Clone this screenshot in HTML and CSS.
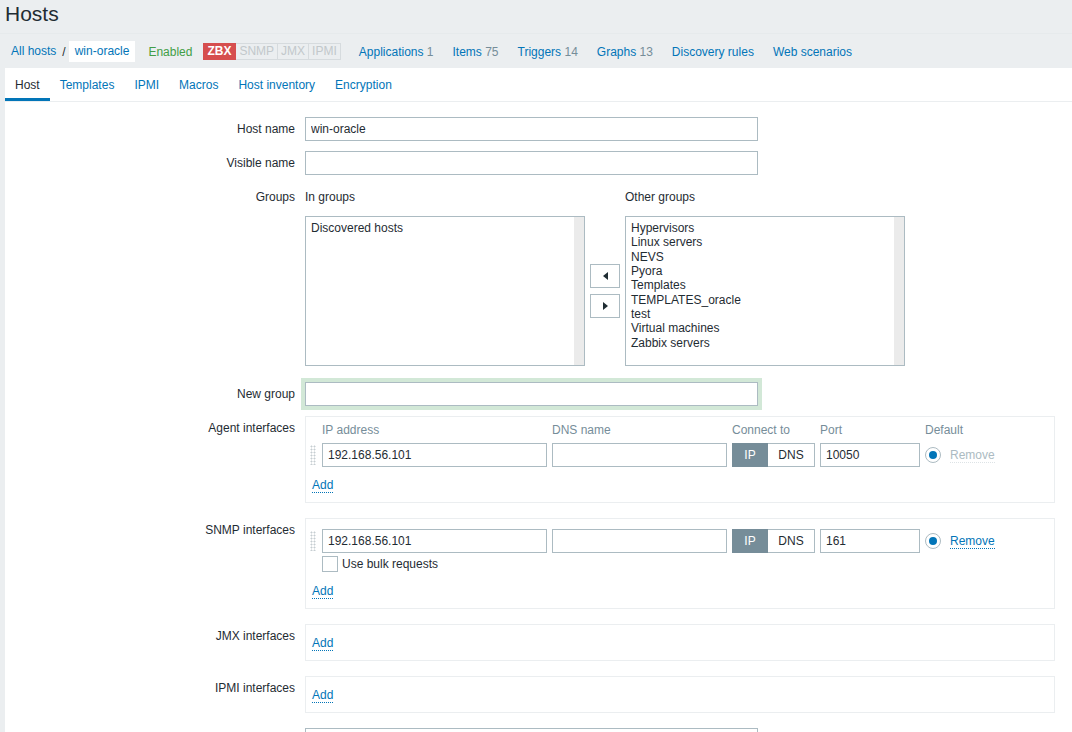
FILE: index.html
```html
<!DOCTYPE html>
<html>
<head>
<meta charset="utf-8">
<title>Hosts</title>
<link rel="stylesheet" href="styles.css">
</head>
<body>
<h1 class="title">Hosts</h1>
<nav class="hostnav">
  <a class="crumb">All hosts</a><span class="sep">/</span><a class="crumb current">win-oracle</a>
  <span class="status-on">Enabled</span>
  <span class="avail"><span class="badge zbx">ZBX</span><span class="badge">SNMP</span><span class="badge">JMX</span><span class="badge">IPMI</span></span>
  <a class="navlink first">Applications <span class="cnt">1</span></a>
  <a class="navlink">Items <span class="cnt">75</span></a>
  <a class="navlink">Triggers <span class="cnt">14</span></a>
  <a class="navlink">Graphs <span class="cnt">13</span></a>
  <a class="navlink">Discovery rules</a>
  <a class="navlink">Web scenarios</a>
</nav>
<div class="panel">
  <ul class="tabs">
    <li class="tab active">Host</li>
    <li class="tab">Templates</li>
    <li class="tab">IPMI</li>
    <li class="tab">Macros</li>
    <li class="tab">Host inventory</li>
    <li class="tab">Encryption</li>
  </ul>
  <div class="form">
    <div class="row">
      <div class="lbl">Host name</div>
      <input class="inp w453" type="text" value="win-oracle">
    </div>
    <div class="row">
      <div class="lbl">Visible name</div>
      <input class="inp w453" type="text" value="">
    </div>
    <div class="row groups-row">
      <div class="lbl">Groups</div>
      <div class="groups">
        <div class="ghead">In groups</div>
        <div class="gspace"></div>
        <div class="ghead">Other groups</div>
        <div class="listbox">
          <div class="opts"><div>Discovered hosts</div></div>
          <div class="track"></div>
        </div>
        <div class="moves">
          <button class="mv"><span class="tri-l"></span></button>
          <button class="mv"><span class="tri-r"></span></button>
        </div>
        <div class="listbox">
          <div class="opts">
            <div>Hypervisors</div>
            <div>Linux servers</div>
            <div>NEVS</div>
            <div>Pyora</div>
            <div>Templates</div>
            <div>TEMPLATES_oracle</div>
            <div>test</div>
            <div>Virtual machines</div>
            <div>Zabbix servers</div>
          </div>
          <div class="track"></div>
        </div>
      </div>
    </div>
    <div class="row">
      <div class="lbl">New group</div>
      <input class="inp w453 focus" type="text" value="">
    </div>
    <div class="row ifrow-wrap">
      <div class="lbl">Agent interfaces</div>
      <div class="ifbox agent">
        <div class="ifhead">
          <div class="c-h"></div>
          <div class="c-ip">IP address</div>
          <div class="c-dns">DNS name</div>
          <div class="c-conn">Connect to</div>
          <div class="c-port">Port</div>
          <div class="c-defh">Default</div>
        </div>
        <div class="ifline">
          <div class="c-h"><div class="handle"></div></div>
          <input class="inp c-ip" type="text" value="192.168.56.101">
          <input class="inp c-dns" type="text" value="">
          <div class="c-conn toggle"><span class="tg on">IP</span><span class="tg">DNS</span></div>
          <input class="inp c-port" type="text" value="10050">
          <div class="c-def"><span class="radio"><span class="dot"></span></span><span class="remove disabled">Remove</span></div>
        </div>
        <div class="addline"><a class="add">Add</a></div>
      </div>
    </div>
    <div class="row ifrow-wrap">
      <div class="lbl">SNMP interfaces</div>
      <div class="ifbox snmp">
        <div class="ifline">
          <div class="c-h"><div class="handle"></div></div>
          <input class="inp c-ip" type="text" value="192.168.56.101">
          <input class="inp c-dns" type="text" value="">
          <div class="c-conn toggle"><span class="tg on">IP</span><span class="tg">DNS</span></div>
          <input class="inp c-port" type="text" value="161">
          <div class="c-def"><span class="radio"><span class="dot"></span></span><a class="remove">Remove</a></div>
        </div>
        <div class="bulk"><span class="check"></span><span class="bulk-lbl">Use bulk requests</span></div>
        <div class="addline"><a class="add">Add</a></div>
      </div>
    </div>
    <div class="row ifrow-wrap">
      <div class="lbl">JMX interfaces</div>
      <div class="ifbox empty">
        <div class="addline"><a class="add">Add</a></div>
      </div>
    </div>
    <div class="row ifrow-wrap">
      <div class="lbl">IPMI interfaces</div>
      <div class="ifbox empty">
        <div class="addline"><a class="add">Add</a></div>
      </div>
    </div>
    <div class="row">
      <div class="lbl"></div>
      <textarea class="inp w453 area" aria-label="Description"></textarea>
    </div>
  </div>
</div>
</body>
</html>
```
FILE: styles.css
```css
* { box-sizing: border-box; }
body {
  margin: 0;
  background: #ebeef0;
  font-family: "Liberation Sans", Arial, sans-serif;
  font-size: 12px;
  color: #1f2c33;
}
a { color: #0275b8; text-decoration: none; cursor: pointer; }

.title {
  margin: 0;
  padding: 0 5px;
  height: 33px;
  font-size: 21px;
  font-weight: normal;
  line-height: 28px;
  color: #1f2c33;
}

.hostnav {
  height: 35px;
  display: flex;
  align-items: center;
  padding: 1px 0 0 5px;
  border-top: 1px solid #e6eaec;
  white-space: nowrap;
}
.crumb {
  height: 21px;
  line-height: 21px;
  padding: 0 6px;
}
.crumb.current {
  background: #fff;
  margin-left: 3px;
}
.sep { color: #1f2c33; }
.status-on { color: #429e47; margin-left: 13px; }
.avail { display: flex; margin-left: 11px; }
.badge {
  height: 17px;
  line-height: 15px;
  padding: 0 3px;
  border: 1px solid #d6dbde;
  border-left: none;
  color: #c2c8cb;
}
.badge.zbx {
  background: #d64e4e;
  border-color: #d64e4e;
  color: #fff;
  font-weight: bold;
  padding: 0 4px;
}
.navlink { margin-left: 19px; }
.navlink.first { margin-left: 18px; }
.cnt { color: #768d99; }

.panel {
  background: #fff;
  margin-left: 5px;
  padding-bottom: 40px;
}
.tabs {
  list-style: none;
  margin: 0;
  padding: 0;
  display: flex;
  height: 34px;
  border-bottom: 1px solid #ebeef0;
}
.tab {
  padding: 1px 10px 0;
  height: 33px;
  line-height: 32px;
  color: #0275b8;
}
.tab.active {
  color: #1f2c33;
  box-shadow: inset 0 -3px 0 #0275b8;
}

.form { padding-top: 15px; }
.row {
  display: flex;
  align-items: flex-start;
  margin-bottom: 10px;
}
.lbl {
  width: 300px;
  flex-shrink: 0;
  padding: 5px 10px 0 0;
  line-height: 14px;
  text-align: right;
}
.inp {
  display: block;
  height: 24px;
  border: 1px solid #acbbc2;
  background: #fff;
  padding: 0 5px;
  margin: 0;
  font: inherit;
  color: #1f2c33;
  outline: none;
}
.w453 { width: 453px; }
.inp.focus { box-shadow: 0 0 0 4px #d2e8d7; }
.area { height: 60px; resize: none; }

.groups-row { margin-bottom: 16px; }
.groups {
  display: grid;
  grid-template-columns: 280px 30px 280px;
  column-gap: 5px;
}
.ghead {
  height: 31px;
  padding-top: 5px;
  line-height: 14px;
}
.listbox {
  height: 150px;
  border: 1px solid #acbbc2;
  display: flex;
}
.opts {
  flex: 1;
  padding: 4px 5px;
  line-height: 14.35px;
}
.track {
  width: 10px;
  background: #ebebeb;
}
.moves {
  align-self: center;
  display: flex;
  flex-direction: column;
  gap: 6px;
}
.mv {
  width: 30px;
  height: 24px;
  border: 1px solid #acbbc2;
  background: #fff;
  padding: 0;
  display: flex;
  align-items: center;
  justify-content: center;
}
.tri-l, .tri-r {
  width: 0;
  height: 0;
  border-top: 4px solid transparent;
  border-bottom: 4px solid transparent;
}
.tri-l { border-right: 5px solid #1f2c33; }
.tri-r { border-left: 5px solid #1f2c33; }

.ifrow-wrap { margin-bottom: 15px; }
.ifbox {
  width: 750px;
  border: 1px solid #ebeef0;
}
.ifbox.agent { padding: 5px 0 10px 0; }
.ifbox.snmp { padding: 10px 0 10px 0; }
.ifbox.empty { padding: 10px 0 10px 0; }
.ifhead {
  display: flex;
  height: 21px;
  padding-top: 1px;
  line-height: 14px;
  color: #768d99;
}
.ifline {
  display: flex;
  align-items: center;
  height: 24px;
}
.c-h { width: 16px; flex-shrink: 0; }
.c-ip { width: 225px; margin-right: 5px; flex-shrink: 0; }
.c-dns { width: 175px; margin-right: 5px; flex-shrink: 0; }
.c-conn { width: 83px; margin-right: 5px; flex-shrink: 0; }
.c-port { width: 100px; margin-right: 5px; flex-shrink: 0; }
.c-def { display: flex; align-items: center; }
.handle {
  width: 6px;
  height: 20px;
  margin-left: 4px;
  background-image: radial-gradient(circle, #c6cdd1 0.9px, transparent 1.1px);
  background-size: 3px 3px;
}
.toggle { display: flex; height: 24px; }
.tg {
  height: 24px;
  line-height: 22px;
  text-align: center;
  border: 1px solid #acbbc2;
  background: #fff;
  color: #1f2c33;
}
.tg.on {
  width: 36px;
  background: #768d99;
  border-color: #768d99;
  color: #fff;
}
.tg:not(.on) { width: 47px; border-left: none; }
.radio {
  width: 16px;
  height: 16px;
  border-radius: 50%;
  border: 1px solid #acbbc2;
  display: flex;
  align-items: center;
  justify-content: center;
  margin-right: 9px;
}
.dot {
  width: 8px;
  height: 8px;
  border-radius: 50%;
  background: #0275b8;
}
.remove { border-bottom: 1px dotted #0275b8; line-height: 13px; margin-top: 2px; }
.remove.disabled { color: #acbbc2; border-bottom-color: #dde3e6; }
.bulk {
  display: flex;
  align-items: center;
  margin-top: 3px;
  padding-left: 16px;
  height: 16px;
}
.check {
  width: 16px;
  height: 16px;
  border: 1px solid #acbbc2;
  background: #fff;
}
.bulk-lbl { margin-left: 4px; }
.addline {
  padding-left: 6px;
  padding-top: 1px;
  line-height: 14px;
  height: 15px;
}
.ifbox.agent .addline { margin-top: 10px; }
.ifbox.snmp .addline { margin-top: 11px; }
.add { border-bottom: 1px dotted #0275b8; }
```
